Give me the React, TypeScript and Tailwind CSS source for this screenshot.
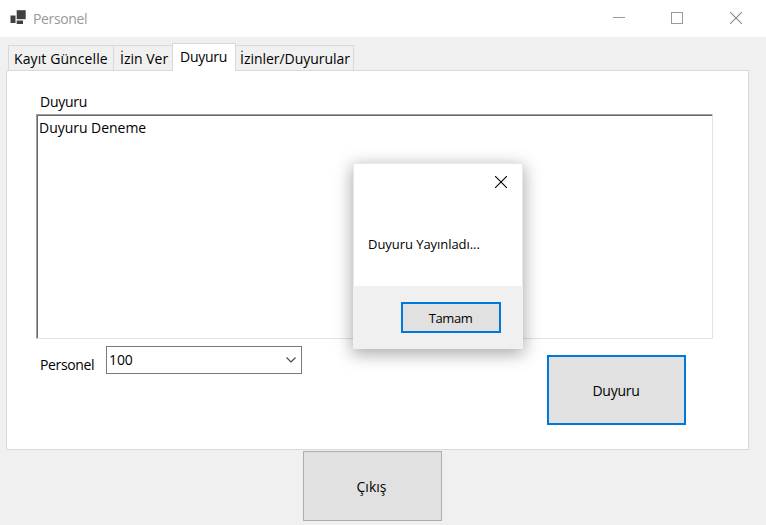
import React from "react";

function AppIcon() {
  return (
    <svg width="17" height="15" viewBox="0 0 17 15" fill="#404040">
      <rect x="6.7" y="0.2" width="9" height="9" />
      <rect x="0.5" y="5.5" width="5" height="7.5" />
      <rect x="6.7" y="10.5" width="6.3" height="3.5" />
    </svg>
  );
}

function Cross({ color }: { color: string }) {
  return (
    <svg width="12" height="12" viewBox="0 0 12 12" fill="none" stroke={color} strokeWidth="1.1">
      <path d="M0 0L12 12M12 0L0 12" />
    </svg>
  );
}

function TitleBar() {
  return (
    <header className="flex h-[37px] items-start bg-white pl-[10px] pr-6">
      <div className="pt-[10px]">
        <AppIcon />
      </div>
      <h1 className="ml-[6px] mt-[9px] text-[14px] leading-5 tracking-[-0.35px] text-[#999999]">Personel</h1>
      <div className="ml-auto flex pt-3">
        <svg className="mr-[46px]" width="12" height="12" viewBox="0 0 12 12" fill="none" stroke="#999999">
          <path d="M0 5.5H12" />
        </svg>
        <svg className="mr-[47px]" width="12" height="12" viewBox="0 0 12 12" fill="none" stroke="#999999">
          <rect x="0.5" y="0.5" width="11" height="11" />
        </svg>
        <Cross color="#8a8a8a" />
      </div>
    </header>
  );
}

function Tabs() {
  return (
    <nav className="relative z-10 -mb-px ml-2 flex h-7 items-end text-[14px] leading-5">
      <button className="h-[26px] w-[106px] border border-[#d9d9d9] bg-[#f0f0f0] pl-[5px] pt-px text-left tracking-[0.1px] whitespace-nowrap">
        Kayıt Güncelle
      </button>
      <button className="-ml-px h-[26px] w-[60px] border border-[#d9d9d9] bg-[#f0f0f0] pl-[6px] pt-px text-left whitespace-nowrap">
        İzin Ver
      </button>
      <button className="-ml-px h-7 w-[64px] border border-b-0 border-[#d9d9d9] bg-white pb-px pl-[7px] text-left tracking-[-0.25px] whitespace-nowrap">
        Duyuru
      </button>
      <button className="-ml-px h-[26px] w-[119px] border border-[#d9d9d9] bg-[#f0f0f0] pl-[4px] pt-px text-left tracking-[-0.03px] whitespace-nowrap">
        İzinler/Duyurular
      </button>
    </nav>
  );
}

function MessageBox() {
  return (
    <div
      role="dialog"
      className="absolute left-[353px] top-[163px] z-20 flex h-[186px] w-[170px] flex-col border border-[#e8e8e8] bg-white shadow-[0_4px_16px_1px_rgba(0,0,0,0.34)]"
    >
      <div className="flex justify-end pr-[15px] pt-3">
        <Cross color="#000000" />
      </div>
      <p className="ml-[14px] mt-[46px] text-[13px] leading-5 tracking-[-0.05px] whitespace-nowrap">Duyuru Yayınladı...</p>
      <footer className="-mx-px -mb-px mt-auto flex h-[63px] items-start justify-end bg-[#f0f0f0] pr-[22px] pt-4">
        <button className="h-[31px] w-[100px] border-2 border-[#0078d7] bg-[#e1e1e1] pr-px text-[13px] leading-5 tracking-[-0.4px]">
          Tamam
        </button>
      </footer>
    </div>
  );
}

export default function App() {
  return (
    <div className="relative h-[525px] w-[766px] overflow-hidden bg-[#f0f0f0] font-['Open_Sans','Noto_Sans',sans-serif] text-black">
      <TitleBar />
      <div className="mt-[6px]">
        <Tabs />
        <main className="ml-[6px] flex h-[380px] w-[743px] flex-col border border-[#d9d9d9] bg-white">
          <label className="ml-[33px] mt-[21px] h-[22px] text-[14px] leading-5 tracking-[-0.25px]">Duyuru</label>
          <div className="ml-[29px] h-[225px] w-[677px] border border-b-[#e3e3e3] border-l-[#a0a0a0] border-r-[#e3e3e3] border-t-[#a0a0a0]">
            <div className="h-full border-l border-t border-[#696969] pl-px pt-[2px] text-[14px] leading-5 tracking-[-0.03px]">
              Duyuru Deneme
            </div>
          </div>
          <div className="flex items-start pl-[33px]">
            <label className="mt-4 w-[66px] text-[14px] leading-5 tracking-[-0.35px]">Personel</label>
            <div className="mt-[7px] flex h-7 w-[196px] items-center justify-between border border-[#7a7a7a] bg-white pl-[2px] pr-[5px] text-[14px] leading-5">
              <span className="tracking-[-0.1px]">100</span>
              <svg width="10" height="6" viewBox="0 0 10 6" fill="none" stroke="#444444" strokeWidth="1.1">
                <path d="M0.5 0.5L5 5L9.5 0.5" />
              </svg>
            </div>
            <button className="ml-[245px] mt-4 h-[70px] w-[139px] border-2 border-[#0078d7] bg-[#e1e1e1] pr-px pt-[2px] text-[14px] leading-5 tracking-[-0.25px]">
              Duyuru
            </button>
          </div>
        </main>
      </div>
      <button className="ml-[303px] mt-px block h-[70px] w-[139px] border border-[#adadad] bg-[#e1e1e1] pr-[2px] pt-[2px] text-[14px] leading-5">
        Çıkış
      </button>
      <MessageBox />
    </div>
  );
}
